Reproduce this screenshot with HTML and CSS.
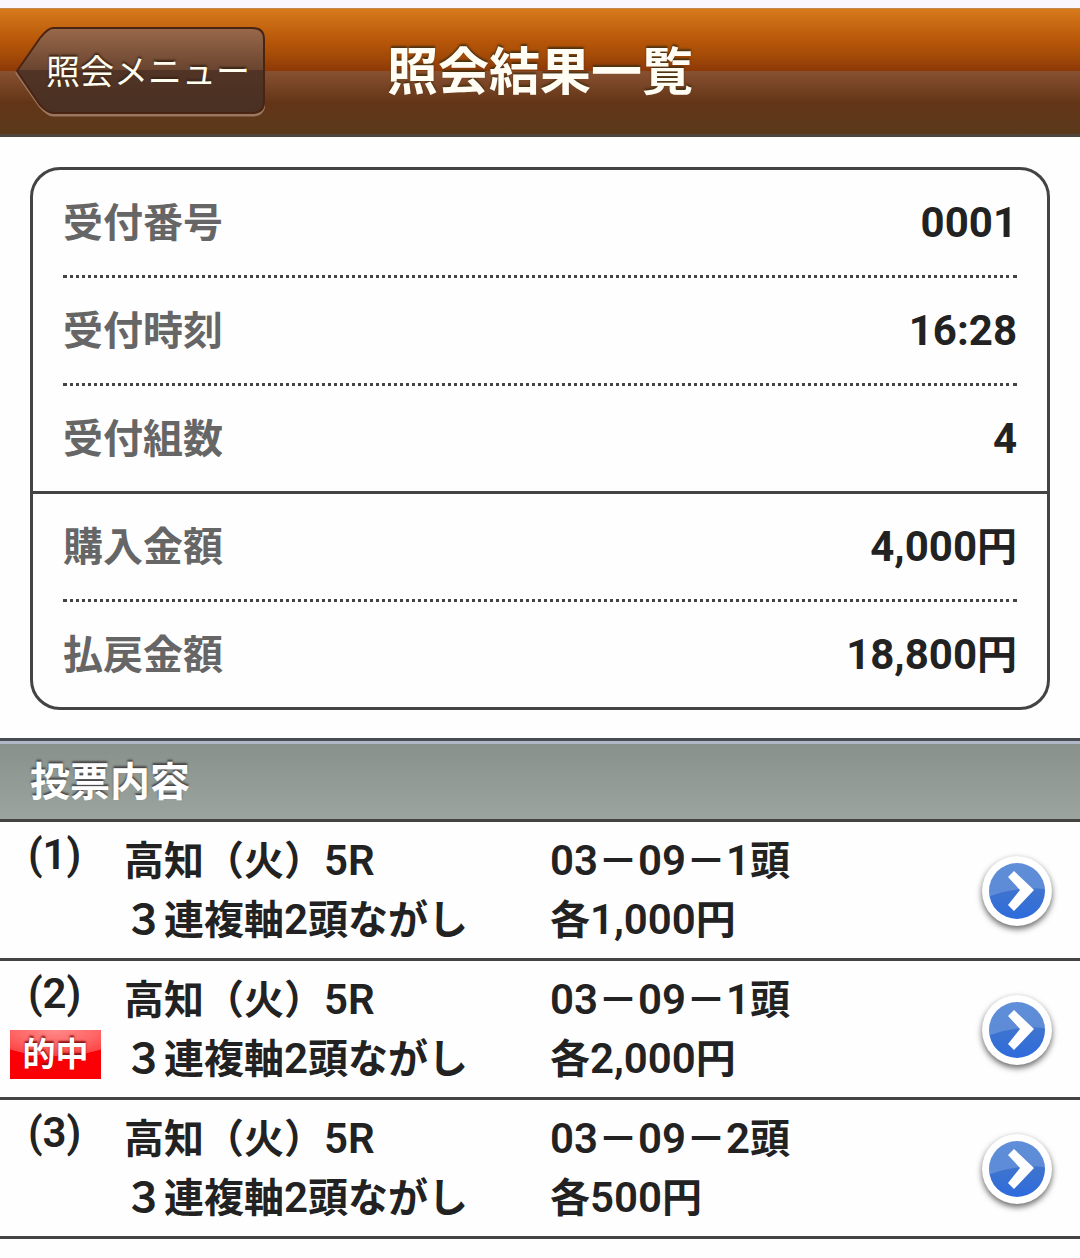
FILE: index.html
```
<!DOCTYPE html>
<html lang="ja">
<head>
    <meta charset="UTF-8">
    <meta name="viewport" content="width=device-width, initial-scale=1">
    <title>照会結果一覧</title>
    <link rel="stylesheet" href="styles.css">
</head>
<body>
    <!-- 共通アイコン -->
    <svg class="defs" width="0" height="0" aria-hidden="true">
        <defs>
            <linearGradient id="blue" x1="0" y1="0" x2="0" y2="1">
                <stop offset="0" stop-color="#5f8fd8"/>
                <stop offset="0.5" stop-color="#3e74cf"/>
                <stop offset="1" stop-color="#2e6bdc"/>
            </linearGradient>
            <linearGradient id="shine" x1="0" y1="0" x2="0" y2="1">
                <stop offset="0" stop-color="#fff" stop-opacity="0"/>
                <stop offset="1" stop-color="#fff" stop-opacity="0.2"/>
            </linearGradient>
            <symbol id="arrow" viewBox="0 0 70 70">
                <circle cx="35" cy="35" r="34" fill="#fff"/>
                <circle cx="35" cy="35" r="28" fill="url(#blue)"/>
                <path d="M7 35a28 28 0 0 1 56-2Q35 30 8 40z" fill="url(#shine)"/>
                <path d="M32 15l-6 6 12 13-12 15 6 6 20-21z" fill="#fff"/>
            </symbol>
        </defs>
    </svg>

    <header class="header">
        <button class="back" type="button">
            <svg class="back-bg" viewBox="0 0 250 91" preserveAspectRatio="none" aria-hidden="true">
                <defs>
                    <linearGradient id="brown" x1="0" y1="0" x2="0" y2="1">
                        <stop offset="0" stop-color="#99694a"/>
                        <stop offset="0.5" stop-color="#69442f"/>
                        <stop offset="0.5" stop-color="#513425"/>
                        <stop offset="1" stop-color="#493023"/>
                    </linearGradient>
                </defs>
                <path d="M2 47L25 14Q33 3 38 3H237Q249 3 249 15V77Q249 89 237 89H38Q33 89 25 80Z" fill="none" stroke="#9a7860" stroke-width="3"/>
                <path d="M2 45L25 12Q33 2 38 2H237Q249 2 249 13V76Q249 87 237 87H38Q33 87 25 79Z" fill="url(#brown)" stroke="#4a2413" stroke-width="2"/>
            </svg>
            <span class="back-text">照会メニュー</span>
        </button>
        <h1>照会結果一覧</h1>
    </header>

    <main>
        <dl class="summary">
            <div class="row"><dt>受付番号</dt><dd><span class="num">0001</span></dd></div>
            <div class="row"><dt>受付時刻</dt><dd><span class="num">16:28</span></dd></div>
            <div class="row"><dt>受付組数</dt><dd><span class="num">4</span></dd></div>
            <div class="row split"><dt>購入金額</dt><dd><span class="num">4,000</span>円</dd></div>
            <div class="row"><dt>払戻金額</dt><dd><span class="num">18,800</span>円</dd></div>
        </dl>

        <h2>投票内容</h2>
        <ul class="bets">
            <li>
                <a class="bet" href="#bet1">
                    <div class="no"><span class="num">(1)</span></div>
                    <div class="race">高知（火）<span class="num">5R</span><br>３連複軸<span class="num">2</span>頭ながし</div>
                    <div class="pick"><span class="num">03</span>－<span class="num">09</span>－<span class="num">1</span>頭<br>各<span class="num">1,000</span>円</div>
                    <svg class="arrow" aria-hidden="true"><use href="#arrow"/></svg>
                </a>
            </li>
            <li>
                <a class="bet" href="#bet2">
                    <div class="no"><span class="num">(2)</span><span class="hit">的中</span></div>
                    <div class="race">高知（火）<span class="num">5R</span><br>３連複軸<span class="num">2</span>頭ながし</div>
                    <div class="pick"><span class="num">03</span>－<span class="num">09</span>－<span class="num">1</span>頭<br>各<span class="num">2,000</span>円</div>
                    <svg class="arrow" aria-hidden="true"><use href="#arrow"/></svg>
                </a>
            </li>
            <li>
                <a class="bet" href="#bet3">
                    <div class="no"><span class="num">(3)</span></div>
                    <div class="race">高知（火）<span class="num">5R</span><br>３連複軸<span class="num">2</span>頭ながし</div>
                    <div class="pick"><span class="num">03</span>－<span class="num">09</span>－<span class="num">2</span>頭<br>各<span class="num">500</span>円</div>
                    <svg class="arrow" aria-hidden="true"><use href="#arrow"/></svg>
                </a>
            </li>
        </ul>
    </main>
</body>
</html>
```
FILE: styles.css
```
* {
    box-sizing: border-box;
    margin: 0;
    padding: 0;
}
body {
    font-family: "Noto Sans CJK JP", sans-serif;
    font-size: 40px;
    font-weight: bold;
    color: #222;
    background: #fefefe;
    border-top: 8px solid #f9f7fd;
}
.defs {
    position: absolute;
}
/* 英数字 */
.num {
    font-family: Roboto, sans-serif;
    font-size: 42px;
    line-height: 1;
}

/* ヘッダー */
.header {
    display: grid;
    grid-template-columns: 1fr auto 1fr;
    align-items: center;
    height: 129px;
    padding: 0 15px;
    border-top: 1px solid #c28a50;
    border-bottom: 3px solid #4f453d;
    background: linear-gradient(#d67a1b 0%, #b85709 25%, #a34a08 38%, #8c3808 50%, #885131 50%, #633517 75%, #5b391c 100%);
}
.header h1 {
    padding-bottom: 8px;
    font-size: 51px;
    line-height: 60px;
    color: #fffdf4;
    text-shadow: 0 -2px 2px #4c3210;
}
.back {
    position: relative;
    justify-self: start;
    width: 250px;
    height: 91px;
    padding: 0 0 4px 31px;
    border: none;
    background: none;
    font-family: inherit;
    font-size: 34px;
    text-align: left;
    white-space: nowrap;
    color: #fffdf0;
    text-shadow: 0 -2px 2px #3a2416;
    cursor: pointer;
}
.back-bg {
    position: absolute;
    inset: 0;
    width: 100%;
    height: 100%;
}
.back-text {
    position: relative;
}

/* 受付情報 */
.summary {
    margin: 30px 30px 28px;
    border: 3px solid #444;
    border-radius: 30px;
}
.row {
    display: flex;
    justify-content: space-between;
    align-items: center;
    height: 105px;
    margin: 0 30px;
    padding-bottom: 6px;
}
.row + .row {
    height: 108px;
    border-top: 3px dotted #444;
}
.row.split {
    margin: 0;
    padding: 0 30px 6px;
}
.row + .row.split {
    border-top-style: solid;
}
.row dt {
    color: #666;
}

/* 投票内容 */
h2 {
    height: 84px;
    padding-left: 30px;
    border-top: 3px solid #474c50;
    border-bottom: 3px solid #444;
    background: linear-gradient(#87908a, #9ba49e);
    box-shadow: inset 0 3px #b0b7c8;
    font-size: 40px;
    line-height: 76px;
    color: #fff;
    text-shadow: 0 -2px 2px #444;
}
.bets {
    list-style: none;
}
.bet {
    display: grid;
    grid-template-columns: 124px 1fr 1fr 104px;
    height: 139px;
    padding-top: 7px;
    border-bottom: 3px solid #444;
    line-height: 59px;
    white-space: nowrap;
    color: inherit;
    text-decoration: none;
}
.bet .num {
    font-weight: 600;
}
.no {
    display: flex;
    flex-direction: column;
    align-items: flex-start;
}
.no .num {
    padding: 5px 0 0 28px;
}
.hit {
    width: 91px;
    height: 49px;
    margin: 15px 0 0 10px;
    background: radial-gradient(ellipse 70px 26px at 50% 0, #f88 0, #f66 60%, #f44 98%, transparent 100%), #fa0006;
    font-size: 33px;
    line-height: 44px;
    text-align: center;
    color: #fff;
    text-shadow: 0 -2px 2px #811;
}
.arrow {
    width: 70px;
    height: 70px;
    margin: 27px 0 0 6px;
    border-radius: 50%;
    box-shadow: 0 3px 6px rgba(0, 0, 0, 0.6);
}
```
